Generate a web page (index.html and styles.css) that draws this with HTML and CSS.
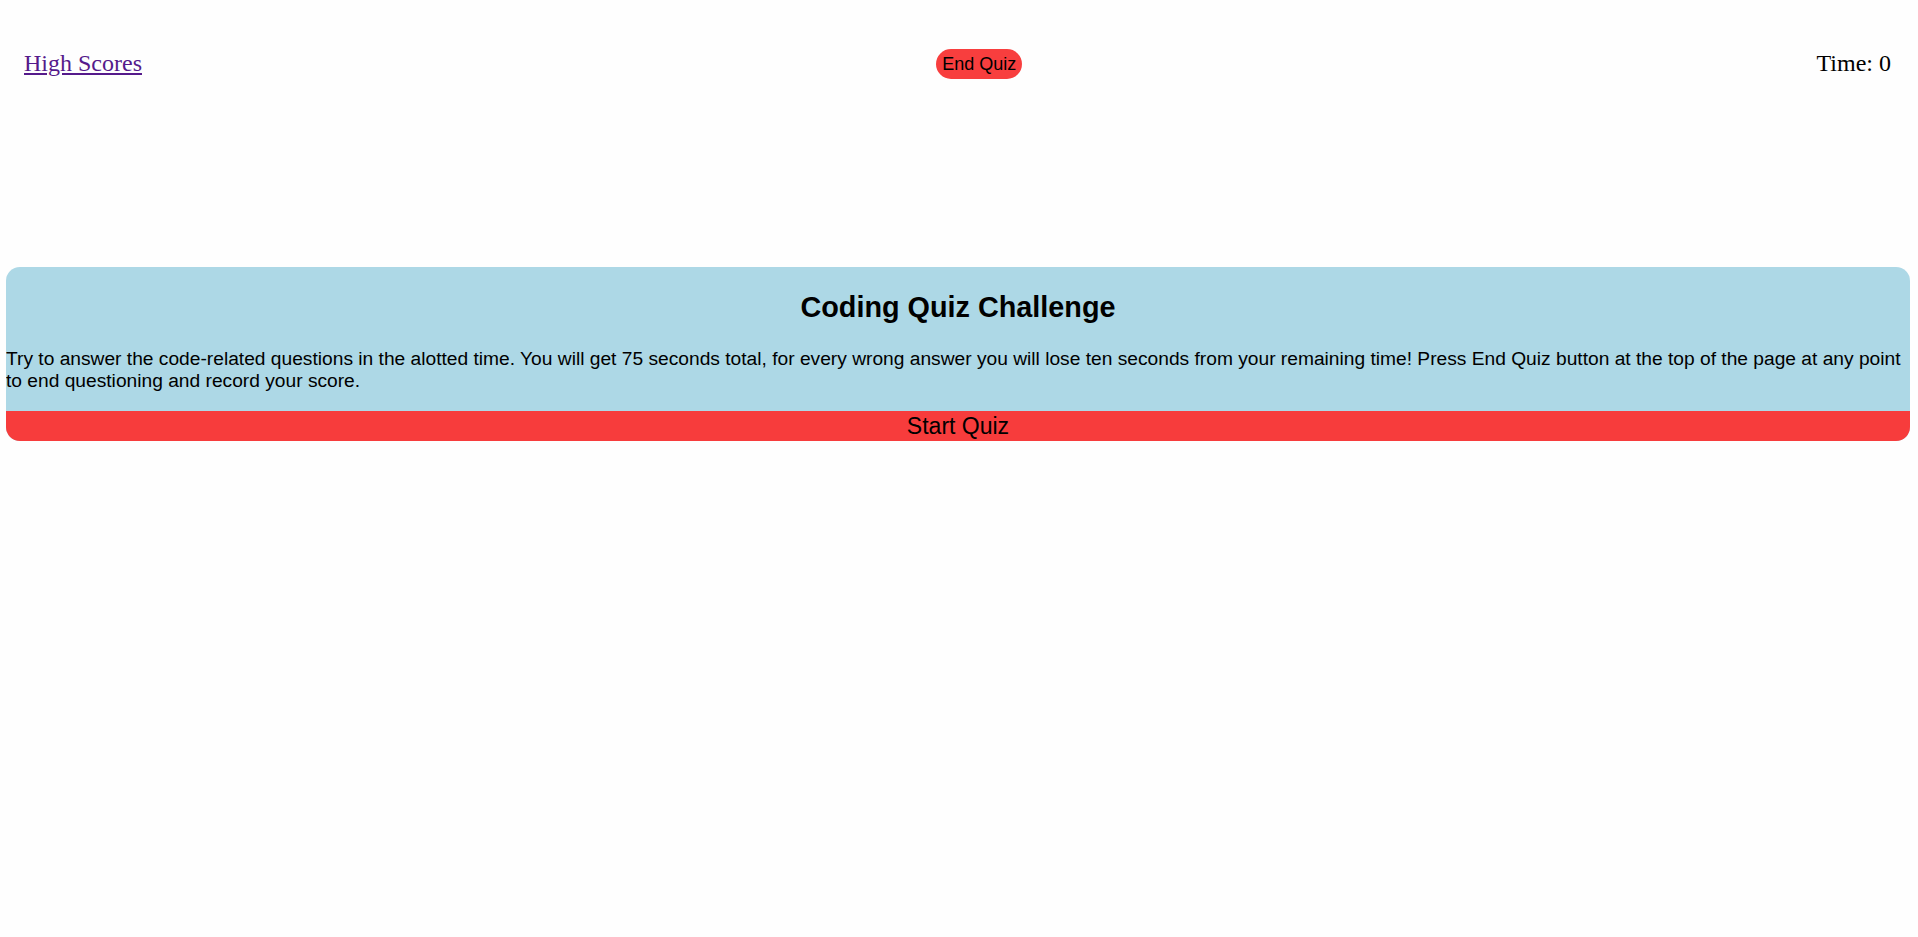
FILE: index.html
```html
<!DOCTYPE html>
<html lang="en">
<head>
<meta charset="utf-8">
<title>Coding Quiz</title>
<link rel="stylesheet" href="styles.css">
</head>
<body>
  <header class="topbar">
    <a class="scores-link" href="#">High Scores</a>
    <button class="end-btn" type="button">End Quiz</button>
    <div class="timer">Time: 0</div>
  </header>
  <main class="card">
    <h2 class="card-title">Coding Quiz Challenge</h2>
    <p class="card-text">Try to answer the code-related questions in the alotted time. You will get 75 seconds total, for every wrong answer you will lose ten seconds from your remaining time! Press End Quiz button at the top of the page at any point to end questioning and record your score.</p>
    <button class="start-btn" type="button">Start Quiz</button>
  </main>
</body>
</html>
```

FILE: styles.css
```css
html, body {
  margin: 0;
  padding: 0;
  background: #fefefe;
}

body {
  font-family: "Liberation Serif", "Times New Roman", serif;
  color: #000;
}

.topbar {
  display: flex;
  justify-content: space-between;
  align-items: center;
  padding: 48px 27px 0 24px;
  height: 30px;
}

.scores-link {
  font-size: 24px;
  color: #551a8b;
  text-decoration: underline;
}

.timer {
  font-size: 24px;
}

.end-btn {
  font-family: "Liberation Sans", Arial, sans-serif;
  font-size: 18px;
  line-height: 22px;
  padding: 4px 6px;
  border: none;
  border-radius: 15px;
  background: #f83e3e;
  color: #000;
  margin-top: 1px;
}

.card {
  margin: 189px 8px 0 6px;
  background: #add8e6;
  border-radius: 14px;
  overflow: hidden;
  font-family: "Liberation Sans", Arial, sans-serif;
  display: flex;
  flex-direction: column;
}

.card-title {
  font-size: 28.8px;
  font-weight: bold;
  text-align: center;
  margin: 24px 0 0;
  line-height: 33px;
}

.card-text {
  font-size: 19.2px;
  line-height: 22px;
  margin: 24px 0 19px;
}

.start-btn {
  font-family: "Liberation Sans", Arial, sans-serif;
  font-size: 23px;
  line-height: 28px;
  padding: 1px 0;
  border: none;
  background: #f73c3c;
  color: #000;
  width: 100%;
}
```
